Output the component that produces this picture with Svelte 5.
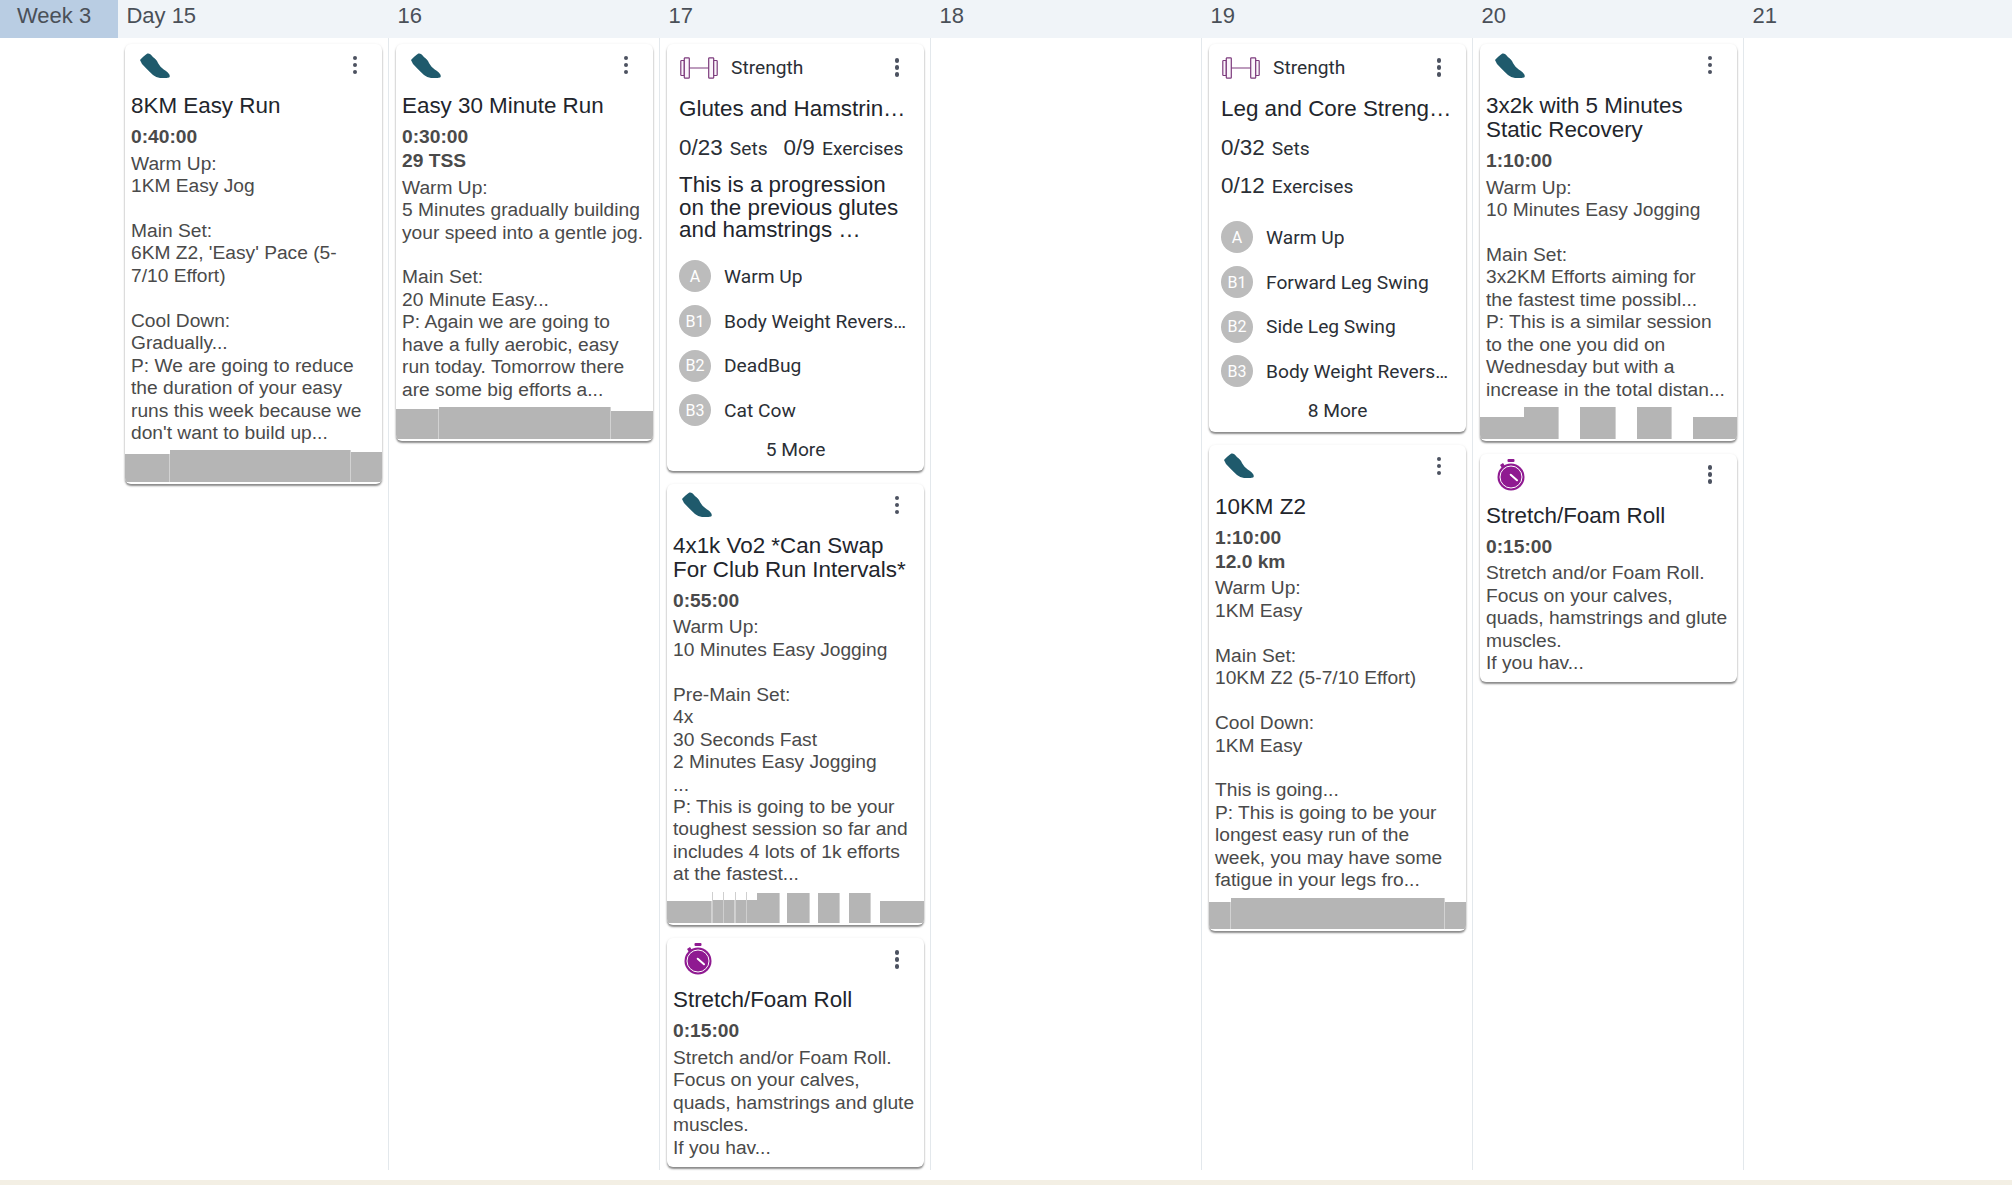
<script>
  const stretchText = "Stretch and/or Foam Roll. Focus on your calves, quads, hamstrings and glute muscles.\nIf you hav...";
  const stretch = { kind: "stretch", title: "Stretch/Foam Roll", stats: ["0:15:00"], text: stretchText };

  const days = [
    { label: "Day 15", cards: [
      { kind: "run", title: "8KM Easy Run", stats: ["0:40:00"],
        text: "Warm Up:\n1KM Easy Jog\n\nMain Set:\n6KM Z2, 'Easy' Pace (5-\n7/10 Effort)\n\nCool Down:\nGradually...\nP: We are going to reduce the duration of your easy runs this week because we don't want to build up...",
        bars: [[0, 44, 28], [45, 180, 32], [226, 31, 30]] }
    ]},
    { label: "16", cards: [
      { kind: "run", title: "Easy 30 Minute Run", stats: ["0:30:00", "29 TSS"],
        text: "Warm Up:\n5 Minutes gradually building your speed into a gentle jog.\n\nMain Set:\n20 Minute Easy...\nP: Again we are going to have a fully aerobic, easy run today. Tomorrow there are some big efforts a...",
        bars: [[0, 42, 30], [43, 171, 32], [215, 42, 28]] }
    ]},
    { label: "17", cards: [
      { kind: "strength", title: "Glutes and Hamstrings Activation", counts: [["0/23", "Sets"], ["0/9", "Exercises"]],
        note: "This is a progression\non the previous glutes\nand hamstrings …",
        items: [["A", "Warm Up"], ["B1", "Body Weight Reverse Lunge"], ["B2", "DeadBug"], ["B3", "Cat Cow"]], more: "5 More" },
      { kind: "run", title: "4x1k Vo2 *Can Swap For Club Run Intervals*", stats: ["0:55:00"],
        text: "Warm Up:\n10 Minutes Easy Jogging\n\nPre-Main Set:\n4x\n30 Seconds Fast\n2 Minutes Easy Jogging\n...\nP: This is going to be your toughest session so far and includes 4 lots of 1k efforts at the fastest...",
        bars: [[0, 44, 22], [45, 1, 31, 1], [46, 10, 23], [56, 1, 31, 1], [57, 10, 23], [68, 1, 31, 1], [69, 10, 23], [79, 1, 31, 1], [80, 11, 23], [90, 22, 30], [120, 22, 30], [151, 21, 30], [182, 21, 30], [213, 44, 22]] },
      stretch
    ]},
    { label: "18", cards: [] },
    { label: "19", cards: [
      { kind: "strength", title: "Leg and Core Strength Routine", counts: [["0/32", "Sets"]], counts2: [["0/12", "Exercises"]],
        items: [["A", "Warm Up"], ["B1", "Forward Leg Swing"], ["B2", "Side Leg Swing"], ["B3", "Body Weight Reverse Lunge"]], more: "8 More" },
      { kind: "run", title: "10KM Z2", stats: ["1:10:00", "12.0 km"],
        text: "Warm Up:\n1KM Easy\n\nMain Set:\n10KM Z2 (5-7/10 Effort)\n\nCool Down:\n1KM Easy\n\nThis is going...\nP: This is going to be your longest easy run of the week, you may have some fatigue in your legs fro...",
        bars: [[0, 21, 27], [22, 213, 31], [236, 21, 27]] }
    ]},
    { label: "20", cards: [
      { kind: "run", title: "3x2k with 5 Minutes Static Recovery", stats: ["1:10:00"],
        text: "Warm Up:\n10 Minutes Easy Jogging\n\nMain Set:\n3x2KM Efforts aiming for\nthe fastest time possibl...\nP: This is a similar session to the one you did on Wednesday but with a increase in the total distan...",
        bars: [[0, 44, 22], [44, 34, 32], [100, 35, 32], [157, 34, 32], [213, 44, 22]] },
      stretch
    ]},
    { label: "21", cards: [] }
  ];
</script>

{#snippet shoe()}
  <svg class="icon-shoe" viewBox="0 0 30 25">
    <path d="M0 7 C2 4.500 5 2 7 0.700 C9 0 11 1.500 12 3 C13.500 4.500 15.500 6 17 8 C18.500 11 20 13.500 22 15 C24 17 27.500 18.500 29 21 C30 22.500 30 24 29 24.500 C26 25.300 22.500 25.300 20 25 C17.500 24.500 15 23.500 13 22 C9 18.500 5.500 14.500 2 11 Z" fill="#1f5a6c"/>
  </svg>
{/snippet}

{#snippet dumbbell()}
  <svg class="icon-bell" viewBox="0 0 38 22" fill="#fbf5fb" stroke="#7c3a7c" stroke-width="1.200">
    <rect x="0.800" y="3.500" width="3.500" height="15" rx="0.800"/>
    <rect x="4.300" y="0.800" width="5" height="20.400" rx="0.800"/>
    <rect x="28.700" y="0.800" width="5" height="20.400" rx="0.800"/>
    <rect x="33.700" y="3.500" width="3.500" height="15" rx="0.800"/>
    <path d="M9.300 11 H28.700"/>
  </svg>
{/snippet}

{#snippet watch()}
  <svg class="icon-watch" viewBox="0 0 28 32">
    <rect x="10.500" y="0" width="7" height="3" rx="1" fill="#8f1a91"/>
    <path d="M3 6 L6 4 L8 7 L5 9 Z" fill="#8f1a91"/>
    <circle cx="14" cy="18" r="13.500" fill="#8f1a91"/>
    <circle cx="14" cy="18" r="11" fill="none" stroke="#fff" stroke-width="1"/>
    <path d="M13.700 15.700 L20 21.300" stroke="#fff" stroke-width="2" stroke-linecap="round"/>
  </svg>
{/snippet}

{#snippet dots()}
  <div class="dots"><i></i><i></i><i></i></div>
{/snippet}

<div class="page">
  <header class="head">
    <div class="week">Week 3</div>
    {#each days as d}
      <div class="day">{d.label}</div>
    {/each}
  </header>

  <div class="grid">
    <div class="spacer"></div>
    {#each days as d}
      <div class="col">
        {#each d.cards as c}
          <article class="card">
            {#if c.kind === "strength"}
              <div class="top strength-top">
                {@render dumbbell()}
                <span class="kind">Strength</span>
                {@render dots()}
              </div>
              <div class="s-title">{c.title}</div>
              <div class="counts">
                {#each c.counts as n}
                  <span><b>{n[0]}</b> {n[1]}</span>
                {/each}
              </div>
              {#if c.counts2}
                <div class="counts">
                  {#each c.counts2 as n}
                    <span><b>{n[0]}</b> {n[1]}</span>
                  {/each}
                </div>
              {/if}
              {#if c.note}
                <div class="note">{c.note}</div>
              {/if}
              <div class="items">
                {#each c.items as it}
                  <div class="item">
                    <span class="badge">{it[0]}</span>
                    <span class="name">{it[1]}</span>
                  </div>
                {/each}
              </div>
              <div class="more">{c.more}</div>
            {:else}
              <div class="top">
                <div class="icon-wrap">
                  {#if c.kind === "run"}{@render shoe()}{:else}{@render watch()}{/if}
                </div>
                {@render dots()}
              </div>
              <div class="body">
                <div class="title">{c.title}</div>
                <div class="stats">
                  {#each c.stats as s}<div>{s}</div>{/each}
                </div>
                <div class="text">{c.text}</div>
              </div>
              {#if c.bars}
                <div class="bars">
                  {#each c.bars as b}
                    <span class:tick={b[3]} style="left:{b[0]}px;width:{b[1]}px;height:{b[2]}px"></span>
                  {/each}
                </div>
              {/if}
            {/if}
          </article>
        {/each}
      </div>
    {/each}
  </div>
  <div class="foot"></div>
</div>

<style>
  :global(body) {
    margin: 0;
    background: #fff;
    overflow: hidden;
  }

  .page {
    width: 2012px;
    height: 1185px;
    display: flex;
    flex-direction: column;
    font-family: "Liberation Sans", Arial, sans-serif;
    color: #4a4a4a;
  }

  .head {
    display: grid;
    grid-template-columns: 118px repeat(7, 271px);
    height: 38px;
    flex: none;
    background: #f0f4f8;
    font-size: 22px;
    line-height: 32px;
    color: #4a5058;
  }

  .week {
    background: #b9cde3;
    padding-left: 17px;
  }

  .day {
    padding-left: 8.400px;
  }

  .grid {
    display: grid;
    grid-template-columns: 118px repeat(7, 271px);
    flex: 1;
    min-height: 0;
  }

  .col {
    border-right: 1px solid #e3e8ec;
    padding: 6px 7px 0 7px;
    box-sizing: border-box;
    display: flex;
    flex-direction: column;
    gap: 13px;
  }

  .foot {
    flex: none;
    height: 15px;
    background: linear-gradient(#fff 10px, #f3efe4 10px);
  }

  .card {
    width: 257px;
    background: #fff;
    border-radius: 6px;
    box-shadow: 0 2px 2px rgba(0, 0, 0, 0.45), 0 0 3px rgba(0, 0, 0, 0.06);
    position: relative;
    overflow: hidden;
    flex: none;
  }

  .top {
    display: flex;
    align-items: center;
    justify-content: space-between;
    height: 42px;
    padding: 0 25px 0 15px;
  }

  .strength-top {
    justify-content: flex-start;
    height: 47px;
    padding: 0 25px 0 13px;
  }

  .icon-wrap {
    display: flex;
    align-items: center;
  }

  .icon-shoe {
    width: 30px;
    height: 25px;
    display: block;
  }

  .icon-watch {
    width: 28px;
    height: 32px;
    display: block;
    margin-left: 2px;
  }

  .icon-bell {
    width: 38px;
    height: 22px;
    display: block;
  }

  .kind {
    font-family: Roboto, sans-serif;
    font-size: 19.200px;
    color: #2b2f36;
    margin-left: 13px;
    flex: 1;
  }

  .dots {
    display: flex;
    flex-direction: column;
    gap: 2.500px;
    flex: none;
  }

  .dots i {
    width: 4.500px;
    height: 4.500px;
    border-radius: 50%;
    background: #4c5260;
  }

  .body {
    padding: 8px 6px 0 6px;
  }

  .body:last-child {
    padding-bottom: 2px;
  }

  .title {
    font-size: 22.400px;
    line-height: 24px;
    color: #22252c;
  }

  .stats {
    margin-top: 7px;
    font-weight: 700;
    font-size: 19.200px;
    line-height: 24px;
  }

  .text {
    font-size: 19.200px;
    line-height: 22.450px;
    white-space: pre-line;
    margin: 3.600px 0 5.500px;
  }

  .bars {
    position: relative;
    height: 32px;
    padding-bottom: 2px;
  }

  .bars span {
    position: absolute;
    bottom: 2px;
    background: #b5b5b5;
    box-shadow: 1px 0 0 #d2d2d2;
  }

  .bars span.tick {
    background: #cfcfcf;
    box-shadow: none;
  }

  .s-title {
    padding: 0 12px;
    font-size: 22.400px;
    line-height: 30px;
    color: #22252c;
    white-space: nowrap;
    overflow: hidden;
    text-overflow: ellipsis;
    margin-top: 3px;
  }

  .counts {
    display: flex;
    gap: 16px;
    padding: 0 12px;
    margin-top: 9px;
    height: 29px;
    align-items: center;
    font-family: Roboto, sans-serif;
    font-size: 19.200px;
    color: #2b2f36;
  }

  .counts b {
    font-family: "Liberation Sans", sans-serif;
    font-weight: 400;
    font-size: 22.400px;
    margin-right: 2.500px;
  }

  .note {
    padding: 0 12px;
    margin-top: 12px;
    font-size: 22.400px;
    line-height: 22.500px;
    color: #22252c;
    white-space: pre-line;
  }

  .items {
    padding: 0 12px;
    margin-top: 12.500px;
  }

  .counts + .items {
    margin-top: 15px;
  }

  .item {
    display: flex;
    align-items: center;
    height: 44.700px;
    gap: 13px;
  }

  .badge {
    width: 32px;
    height: 32px;
    border-radius: 50%;
    background: #bcbcbc;
    color: #fff;
    font-family: Roboto, sans-serif;
    font-size: 16px;
    display: flex;
    align-items: center;
    justify-content: center;
    flex: none;
  }

  .name {
    font-family: Roboto, sans-serif;
    font-size: 19.200px;
    color: #2b2f36;
    white-space: nowrap;
    overflow: hidden;
    text-overflow: ellipsis;
    max-width: 184px;
  }

  .more {
    font-family: Roboto, sans-serif;
    font-size: 19.200px;
    color: #2b2f36;
    text-align: center;
    line-height: 22px;
    padding: 6px 0 10px;
  }
</style>
